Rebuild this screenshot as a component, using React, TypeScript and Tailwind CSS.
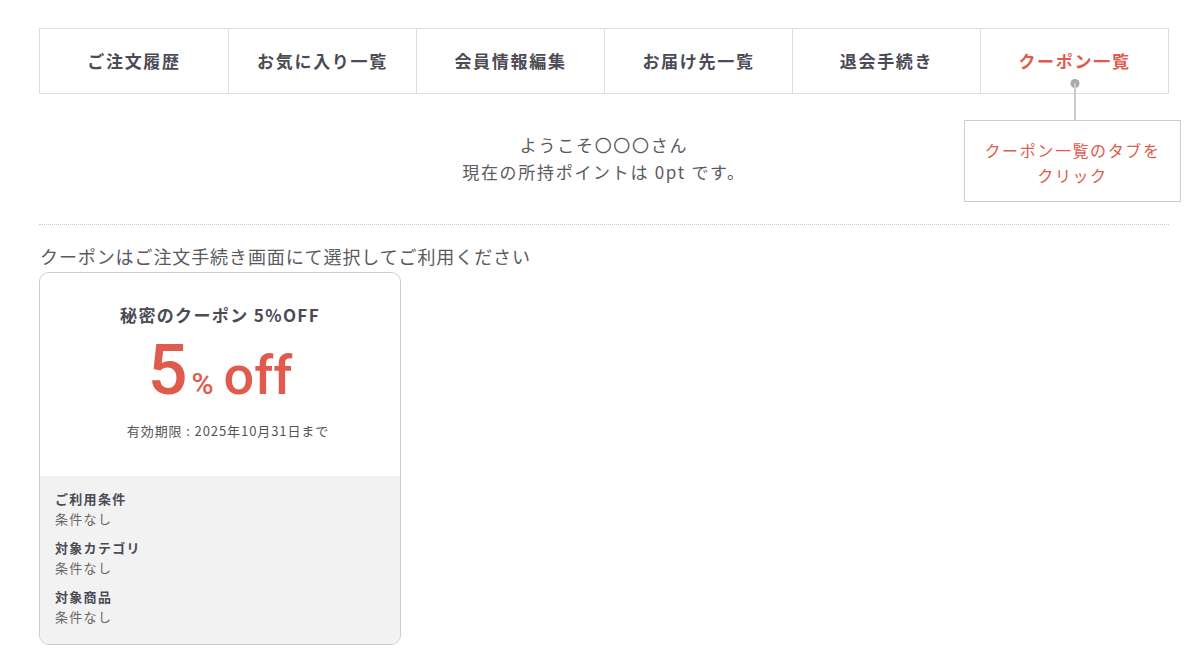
import React from 'react';

const tabs = ['ご注文履歴', 'お気に入り一覧', '会員情報編集', 'お届け先一覧', '退会手続き', 'クーポン一覧'];

const conditions = [
  { label: 'ご利用条件', value: '条件なし' },
  { label: '対象カテゴリ', value: '条件なし' },
  { label: '対象商品', value: '条件なし' },
];

export default function App() {
  return (
    <div className="min-h-[666px] bg-white font-['Noto_Sans_CJK_JP',sans-serif] text-[#555]">
      <div className="relative ml-[39px] w-[1130px] pt-[28px]">
        {/* Tabs */}
        <div className="grid h-[66px] grid-cols-6 border border-[#ddd]">
          {tabs.map((t, i) => (
            <div
              key={t}
              className={`flex items-center justify-center text-[17px] font-bold tracking-[0.1em] ${i > 0 ? 'border-l border-[#ddd]' : ''} ${i === tabs.length - 1 ? 'relative text-[#e05a4e]' : 'text-[#4b4b55]'}`}
            >
              {t}
              {i === tabs.length - 1 && (
                <>
                  <span className="absolute left-1/2 top-[50px] h-[9px] w-[9px] -translate-x-1/2 rounded-full bg-[#aaa]" />
                  <span className="absolute left-1/2 top-[54px] h-[38px] w-[2px] -translate-x-1/2 bg-[#ccc]" />
                </>
              )}
            </div>
          ))}
        </div>

        {/* Callout */}
        <div className="absolute left-[925px] top-[120px] flex h-[82px] w-[217px] flex-col items-center justify-center border border-[#ccc] bg-white pt-[3px] text-[16px] leading-[25px] tracking-[0.1em] text-[#e05a4e]">
          <span>クーポン一覧のタブを</span>
          <span>クリック</span>
        </div>

        {/* Welcome */}
        <div className="flex flex-col items-center pt-[37px] pb-[39px] text-[17px] leading-[27px] tracking-[0.1em] text-[#5a5a60]">
          <span>ようこそ〇〇〇さん</span>
          <span>現在の所持ポイントは 0pt です。</span>
        </div>

        <div className="border-t border-dotted border-[#ccc]" />

        <p className="mt-[19px] ml-px text-[18px] leading-[24px] tracking-[0.05em] text-[#5a5a60]">クーポンはご注文手続き画面にて選択してご利用ください</p>

        {/* Coupon card */}
        <div className="mt-[4px] w-[362px] overflow-hidden rounded-[10px] border border-[#ccc]">
          <div className="flex h-[203px] flex-col items-center bg-white pt-[28px]">
            <div className="text-[17px] font-bold leading-[28px] tracking-[0.08em] text-[#4b4b55]">秘密のクーポン 5%OFF</div>
            <div className="mt-[6px] flex items-baseline font-['Roboto',sans-serif] font-medium leading-[70px] text-[#e05a4e]">
              <span className="text-[70px]">5</span>
              <span className="ml-[4px] text-[30px]">%</span>
              <span className="ml-[10px] text-[54px]">off</span>
            </div>
            <div className="mt-[3px] ml-[16px] text-[13px] leading-[18px] tracking-[0.07em] text-[#555]">有効期限 : 2025年10月31日まで</div>
          </div>
          <div className="flex flex-col gap-[9px] bg-[#f2f2f2] px-[15px] pt-[13px] pb-[17px]">
            {conditions.map((c) => (
              <div key={c.label} className="text-[13px] leading-[20px] tracking-[0.1em]">
                <div className="font-bold text-[#4b4b55]">{c.label}</div>
                <div className="text-[#666]">{c.value}</div>
              </div>
            ))}
          </div>
        </div>
      </div>
    </div>
  );
}
